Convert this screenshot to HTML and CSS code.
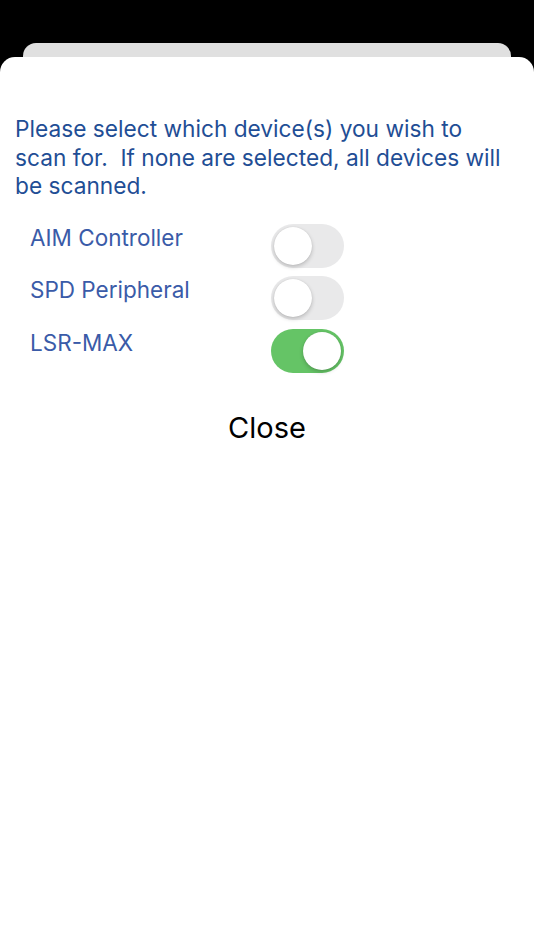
FILE: index.html
```html
<!DOCTYPE html>
<html lang="en">
<head>
  <meta charset="UTF-8" />
  <title>Scan Devices</title>
  <meta name="viewport" content="width=device-width, initial-scale=1" />
  <link rel="stylesheet" href="styles.css">
</head>
<body>
  <div class="back-sheet"></div>
  <div class="sheet">
    <p class="intro">Please select which device(s) you wish to scan for.&nbsp; If none are selected, all devices will be scanned.</p>

    <div class="device-list">
      <div class="device-row">
        <span class="device-name">AIM Controller</span>
        <label class="switch"><input type="checkbox" /><span class="knob"></span></label>
      </div>
      <div class="device-row">
        <span class="device-name">SPD Peripheral</span>
        <label class="switch"><input type="checkbox" /><span class="knob"></span></label>
      </div>
      <div class="device-row">
        <span class="device-name">LSR-MAX</span>
        <label class="switch"><input type="checkbox" checked /><span class="knob"></span></label>
      </div>
    </div>

    <button class="close-btn">Close</button>
  </div>
</body>
</html>
```

FILE: styles.css
```css
* { box-sizing: border-box; }
html, body { height: 100%; }
body {
  margin: 0; background: #000;
  font-family: Inter, 'Liberation Sans', sans-serif;
  overflow: hidden;
}
.back-sheet {
  margin: 43px 23px 0; height: 14px;
  background: #e0e0e0; border-radius: 13px 13px 0 0;
}
.sheet {
  background: #fff; height: calc(100% - 57px);
  border-radius: 15px 15px 0 0;
  padding: 58px 15px 0;
}
.intro {
  margin: 0 12px 0 0; color: #1f4e95;
  font-size: 22.7px; line-height: 28.5px;
}
.device-list {
  margin-top: 23px; padding-left: 15px;
  display: flex; flex-direction: column; gap: 8px;
}
.device-row {
  display: flex; align-items: flex-start; height: 44.5px;
}
.device-name {
  width: 241px; color: #3a5ba8;
  font-size: 22.5px; line-height: 28px;
}
.switch {
  position: relative; display: inline-block;
  width: 73px; height: 44px;
}
.switch input { display: none; }
.knob {
  position: absolute; inset: 0;
  background: #e9e9ea; border-radius: 22px;
}
.knob::before {
  content: ""; position: absolute; top: 3px; left: 3px;
  width: 38px; height: 38px; border-radius: 50%;
  background: #fff; box-shadow: 0 2px 4px rgba(0,0,0,0.2), 0 0 1px rgba(0,0,0,0.15);
}
.switch input:checked + .knob { background: #65c466; }
.switch input:checked + .knob::before { left: 32px; }
.close-btn {
  display: block; margin: 37px auto 0;
  background: none; border: none; padding: 0;
  font-family: inherit; font-size: 29px; color: #000;
}
```
